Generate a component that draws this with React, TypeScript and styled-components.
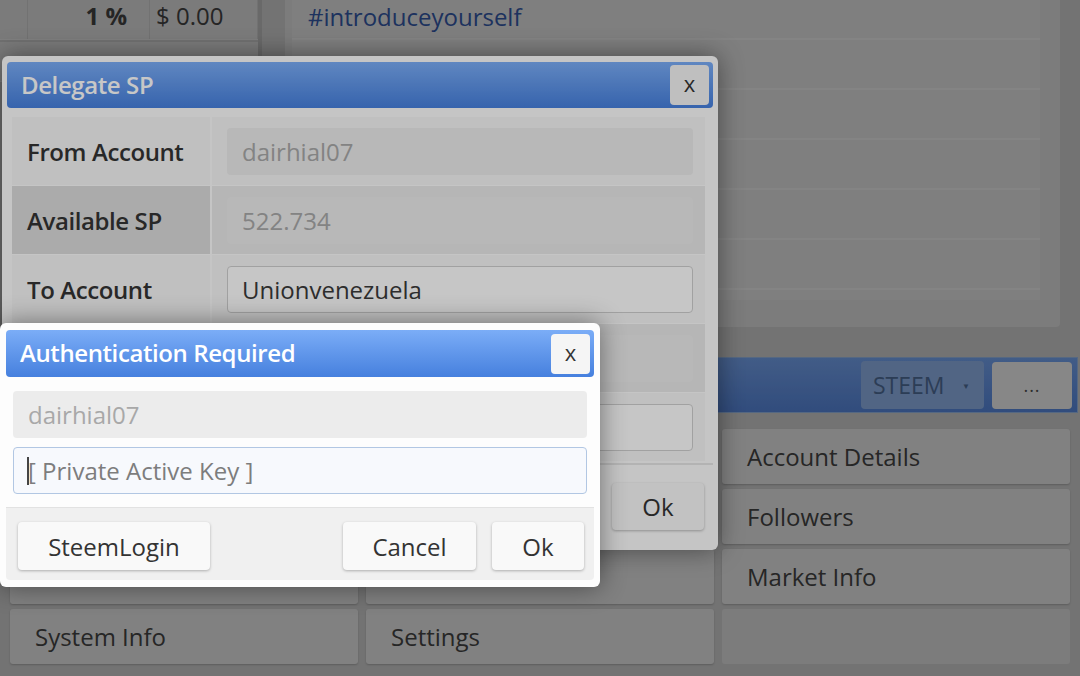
import React from 'react';
import styled, { createGlobalStyle } from 'styled-components';

const GlobalStyle = createGlobalStyle`
  html, body {
    margin: 0;
    padding: 0;
    background: #d6d6d6;
  }
  body {
    font-family: 'Open Sans', 'Liberation Sans', Arial, sans-serif;
    overflow: hidden;
  }
  * {
    box-sizing: border-box;
  }
`;

const Page = styled.div`
  position: relative;
  width: 1080px;
  height: 676px;
  overflow: hidden;
  background: #d4d4d4;
  display: flex;
  flex-direction: column;
`;

/* ---------- wallet page behind the dialogs ---------- */

const TopSection = styled.div`
  display: flex;
  height: 327px;
  gap: 23px;
`;

const PostTable = styled.div`
  width: 262px;
  display: flex;
  flex-direction: column;
  gap: 2px;
  background: #cfcfcf;
  border-right: 4px solid #c2c2c2;
`;

const PostRow = styled.div`
  display: grid;
  grid-template-columns: 28px 122px 108px;
  height: 40px;
  background: #e2e2e2;
  border-bottom: 1px solid #ededed;
`;

const PostCell = styled.div<{ $right?: boolean; $bold?: boolean }>`
  display: flex;
  align-items: center;
  justify-content: ${(p) => (p.$right ? 'flex-end' : 'flex-start')};
  padding: 2px ${(p) => (p.$right ? '22px' : '0')} 9px ${(p) => (p.$right ? '0' : '6px')};
  border-right: 1px solid #d2d2d2;
  font-size: 24px;
  line-height: 1;
  font-weight: ${(p) => (p.$bold ? 700 : 400)};
  color: #464646;
  white-space: nowrap;
`;

const TagCard = styled.div`
  width: 775px;
  background: #e4e4e4;
  padding: 0 20px 25px 7px;
  border-radius: 0 0 4px 4px;
`;

const TagList = styled.div`
  display: flex;
  flex-direction: column;
  background: #eaeaea;
  padding-bottom: 10px;
`;

const TagRow = styled.div<{ $first?: boolean }>`
  height: ${(p) => (p.$first ? '40px' : '50px')};
  display: flex;
  align-items: center;
  padding: ${(p) => (p.$first ? '4px 16px 8px' : '0 16px')};
  border-bottom: 2px solid #f3f3f3;
`;

const TagLink = styled.a`
  display: block;
  font-size: 24px;
  line-height: 1;
  color: #375cae;
  text-decoration: none;
`;

const Toolbar = styled.div`
  margin-top: 30px;
  height: 56px;
  display: flex;
  align-items: center;
  justify-content: flex-end;
  gap: 8px;
  padding: 0 5px 0 0;
  margin-right: 2px;
  background: linear-gradient(#7aaaf8, #5b8de6);
  border: 1px solid #9ec0f0;
`;

const CoinSelect = styled.div`
  width: 123px;
  height: 48px;
  display: flex;
  align-items: center;
  justify-content: space-between;
  padding: 0 14px 0 12px;
  background: #96baf2;
  border-radius: 4px;
  font-size: 23px;
  color: #52719f;
`;

const Caret = styled.span`
  font-size: 8px;
  color: #52719f;
`;

const MoreButton = styled.div`
  width: 80px;
  height: 47px;
  display: flex;
  align-items: flex-end;
  justify-content: center;
  padding-bottom: 12px;
  background: #fafafa;
  border-radius: 4px;
  font-size: 18px;
  letter-spacing: 1px;
  color: #555;
`;

const MenuGrid = styled.div`
  display: grid;
  grid-template-columns: repeat(3, 348px);
  grid-auto-rows: 55px;
  gap: 5px 8px;
  padding: 16px 10px 0;
`;

const MenuItem = styled.div<{ $blank?: boolean }>`
  display: flex;
  align-items: center;
  padding-left: 25px;
  background: ${(p) => (p.$blank ? '#e4e4e4' : '#eeeeee')};
  border-radius: 3px;
  box-shadow: ${(p) => (p.$blank ? 'none' : '0 1px 2px rgba(0,0,0,0.2)')};
  font-size: 24px;
  color: #474747;
`;

/* ---------- modal layers ---------- */

const Backdrop = styled.div<{ $shade: number }>`
  position: absolute;
  inset: 0;
  background: rgba(0, 0, 0, ${(p) => p.$shade});
`;

const Dialog = styled.div<{ $left: number; $top: number; $width: number; $pad: string }>`
  position: absolute;
  left: ${(p) => p.$left}px;
  top: ${(p) => p.$top}px;
  width: ${(p) => p.$width}px;
  padding: ${(p) => p.$pad};
  background: #fdfdfd;
  border-radius: 6px;
  box-shadow: 0 0 26px rgba(0, 0, 0, 0.45);
  display: flex;
  flex-direction: column;
`;

const DialogHeader = styled.div<{ $height: number }>`
  height: ${(p) => p.$height}px;
  display: flex;
  align-items: center;
  justify-content: space-between;
  padding: 0 4px 0 14px;
  border-radius: 4px;
  background: linear-gradient(#7badf7, #4680de);
`;

const DialogTitle = styled.div`
  font-size: 24px;
  font-weight: 600;
  color: #ffffff;
  letter-spacing: -0.4px;
  margin-top: -2px;
`;

const CloseButton = styled.button`
  width: 39px;
  height: 40px;
  border: none;
  border-radius: 4px;
  background: #f5f5f5;
  font-family: inherit;
  font-size: 22px;
  line-height: 1;
  color: #333;
  padding: 0 0 4px;
`;

const FormTable = styled.div`
  display: flex;
  flex-direction: column;
  gap: 1px;
  margin: 9px 8px 0 5px;
`;

const FormRow = styled.div<{ $striped?: boolean }>`
  display: grid;
  grid-template-columns: 198px 1fr;
  gap: 2px;
  height: 68px;

  & > div:first-child {
    background: ${(p) => (p.$striped ? '#dcdcdc' : '#f6f6f6')};
  }
  & > div:last-child {
    background: ${(p) => (p.$striped ? '#e9e9e9' : '#f6f6f6')};
  }
`;

const FormLabel = styled.div`
  display: flex;
  align-items: center;
  padding-left: 15px;
  font-size: 24px;
  font-weight: 600;
  color: #343434;
  letter-spacing: -0.4px;
`;

const FormValue = styled.div`
  display: flex;
  align-items: center;
  padding: 0 12px 0 15px;
`;

const TextField = styled.input<{ $tone?: 'locked' | 'open' | 'focus' }>`
  width: 100%;
  height: 47px;
  padding: 0 14px;
  border-radius: 4px;
  font-family: inherit;
  font-size: 24px;
  outline: none;
  border: 1px solid
    ${(p) => (p.$tone === 'open' ? '#cfcfcf' : p.$tone === 'focus' ? '#b2c7e3' : 'transparent')};
  background: ${(p) => (p.$tone === 'open' ? '#fefefe' : p.$tone === 'focus' ? '#f7f9fd' : '#ececec')};
  color: ${(p) => (p.$tone === 'locked' ? '#a8a8a8' : '#3a3a3a')};

  &::placeholder {
    color: #7d7d7d;
  }
`;

const DelegateFooter = styled.div`
  display: flex;
  justify-content: flex-end;
  margin-top: 2px;
  padding: 18px 9px 12px;
  border-top: 2px solid #e6e6e6;
`;

const ActionButton = styled.button<{ $width: number; $height?: number }>`
  width: ${(p) => p.$width}px;
  height: ${(p) => p.$height ?? 48}px;
  border: none;
  border-radius: 4px;
  background: #f9f9f9;
  box-shadow: 0 1px 3px rgba(0, 0, 0, 0.28);
  font-family: inherit;
  font-size: 24px;
  color: #333;
`;

const AuthBody = styled.div`
  display: flex;
  flex-direction: column;
  gap: 9px;
  padding: 14px 7px 0;
`;

const KeyField = styled.div`
  position: relative;
`;

const TextCursor = styled.span`
  position: absolute;
  left: 14px;
  top: 10px;
  width: 1.5px;
  height: 28px;
  background: #444;
`;

const AuthFooter = styled.div`
  display: flex;
  gap: 16px;
  margin-top: 13px;
  padding: 14px 10px 10px 12px;
  border-top: 1px solid #e2e2e2;
  background: #f0f0f0;
  border-radius: 0 0 4px 4px;

  & > button:first-child {
    margin-right: auto;
  }
`;

export default function App() {
  return (
    <>
      <GlobalStyle />
      <Page>
        <TopSection>
          <PostTable>
            <PostRow>
              <PostCell />
              <PostCell $right $bold>1 %</PostCell>
              <PostCell>$ 0.00</PostCell>
            </PostRow>
            <PostRow />
          </PostTable>
          <TagCard>
            <TagList>
              <TagRow $first>
                <TagLink>#introduceyourself</TagLink>
              </TagRow>
              <TagRow />
              <TagRow />
              <TagRow />
              <TagRow />
              <TagRow />
            </TagList>
          </TagCard>
        </TopSection>

        <Toolbar>
          <CoinSelect>
            STEEM <Caret>▼</Caret>
          </CoinSelect>
          <MoreButton>...</MoreButton>
        </Toolbar>

        <MenuGrid>
          <MenuItem />
          <MenuItem />
          <MenuItem>Account Details</MenuItem>
          <MenuItem />
          <MenuItem />
          <MenuItem>Followers</MenuItem>
          <MenuItem />
          <MenuItem />
          <MenuItem>Market Info</MenuItem>
          <MenuItem>System Info</MenuItem>
          <MenuItem>Settings</MenuItem>
          <MenuItem $blank />
        </MenuGrid>

        <Backdrop $shade={0.3} />

        <Dialog $left={2} $top={56} $width={716} $pad="6px 5px 8px">
          <DialogHeader $height={46}>
            <DialogTitle>Delegate SP</DialogTitle>
            <CloseButton>x</CloseButton>
          </DialogHeader>
          <FormTable>
            <FormRow>
              <FormLabel>From Account</FormLabel>
              <FormValue>
                <TextField $tone="locked" readOnly value="dairhial07" />
              </FormValue>
            </FormRow>
            <FormRow $striped>
              <FormLabel>Available SP</FormLabel>
              <FormValue>
                <TextField $tone="locked" readOnly value="522.734" />
              </FormValue>
            </FormRow>
            <FormRow>
              <FormLabel>To Account</FormLabel>
              <FormValue>
                <TextField $tone="open" readOnly value="Unionvenezuela" />
              </FormValue>
            </FormRow>
            <FormRow $striped>
              <FormLabel />
              <FormValue>
                <TextField $tone="locked" readOnly value="" />
              </FormValue>
            </FormRow>
            <FormRow>
              <FormLabel />
              <FormValue>
                <TextField $tone="open" readOnly value="" />
              </FormValue>
            </FormRow>
          </FormTable>
          <DelegateFooter>
            <ActionButton $width={92} $height={47}>Ok</ActionButton>
          </DelegateFooter>
        </Dialog>

        <Backdrop $shade={0.22} />

        <Dialog $left={0} $top={323} $width={600} $pad="7px 6px">
          <DialogHeader $height={47}>
            <DialogTitle>Authentication Required</DialogTitle>
            <CloseButton>x</CloseButton>
          </DialogHeader>
          <AuthBody>
            <TextField $tone="locked" readOnly value="dairhial07" />
            <KeyField>
              <TextField $tone="focus" placeholder="[ Private Active Key ]" />
              <TextCursor />
            </KeyField>
          </AuthBody>
          <AuthFooter>
            <ActionButton $width={192}>SteemLogin</ActionButton>
            <ActionButton $width={133}>Cancel</ActionButton>
            <ActionButton $width={92}>Ok</ActionButton>
          </AuthFooter>
        </Dialog>
      </Page>
    </>
  );
}
